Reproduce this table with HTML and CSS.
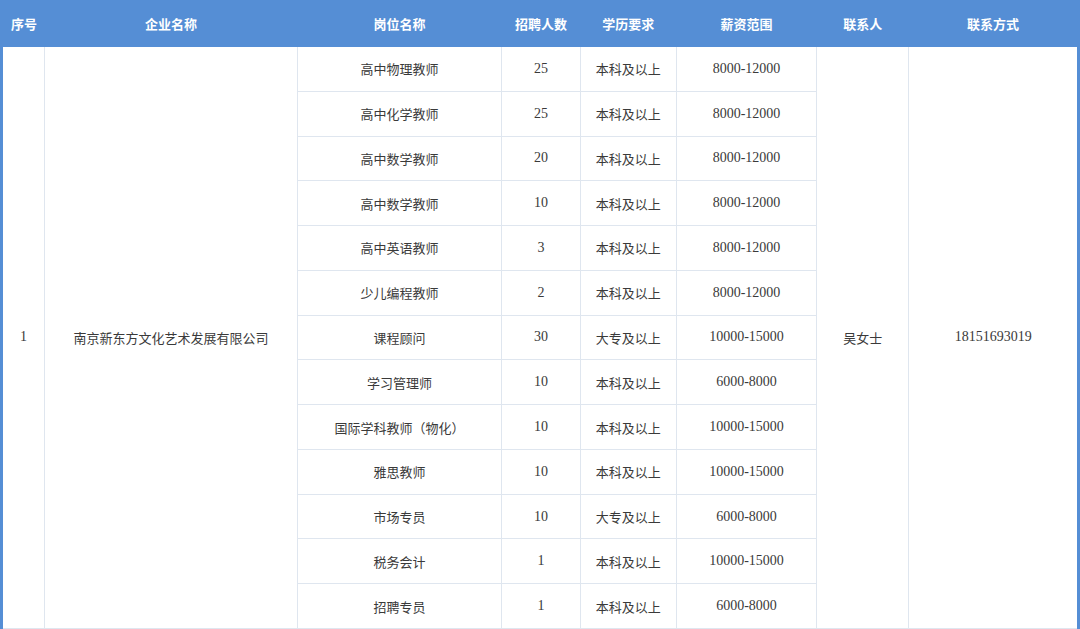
FILE: index.html
```html
<!DOCTYPE html>
<html lang="zh">
<head>
<meta charset="utf-8">
<link rel="stylesheet" href="styles.css">
</head>
<body>
<table class="jobs">
<colgroup>
<col class="c-no"><col class="c-company"><col class="c-post"><col class="c-num"><col class="c-edu"><col class="c-salary"><col class="c-contact"><col class="c-phone">
</colgroup>
<thead>
<tr><th>序号</th><th>企业名称</th><th>岗位名称</th><th>招聘人数</th><th>学历要求</th><th>薪资范围</th><th>联系人</th><th>联系方式</th></tr>
</thead>
<tbody>
<tr><td rowspan="13" class="num">1</td><td rowspan="13">南京新东方文化艺术发展有限公司</td><td>高中物理教师</td><td class="num">25</td><td>本科及以上</td><td class="num">8000-12000</td><td rowspan="13">吴女士</td><td rowspan="13" class="num">18151693019</td></tr>
<tr><td>高中化学教师</td><td class="num">25</td><td>本科及以上</td><td class="num">8000-12000</td></tr>
<tr><td>高中数学教师</td><td class="num">20</td><td>本科及以上</td><td class="num">8000-12000</td></tr>
<tr><td>高中数学教师</td><td class="num">10</td><td>本科及以上</td><td class="num">8000-12000</td></tr>
<tr><td>高中英语教师</td><td class="num">3</td><td>本科及以上</td><td class="num">8000-12000</td></tr>
<tr><td>少儿编程教师</td><td class="num">2</td><td>本科及以上</td><td class="num">8000-12000</td></tr>
<tr><td>课程顾问</td><td class="num">30</td><td>大专及以上</td><td class="num">10000-15000</td></tr>
<tr><td>学习管理师</td><td class="num">10</td><td>本科及以上</td><td class="num">6000-8000</td></tr>
<tr><td>国际学科教师（物化）</td><td class="num">10</td><td>本科及以上</td><td class="num">10000-15000</td></tr>
<tr><td>雅思教师</td><td class="num">10</td><td>本科及以上</td><td class="num">10000-15000</td></tr>
<tr><td>市场专员</td><td class="num">10</td><td>大专及以上</td><td class="num">6000-8000</td></tr>
<tr><td>税务会计</td><td class="num">1</td><td>本科及以上</td><td class="num">10000-15000</td></tr>
<tr><td>招聘专员</td><td class="num">1</td><td>本科及以上</td><td class="num">6000-8000</td></tr>
</tbody>
</table>
</body>
</html>
```
FILE: styles.css
```css
html, body {
  margin: 0;
  padding: 0;
  background: #ffffff;
}
body {
  font-family: "Noto Sans CJK SC", sans-serif;
  color: #3a3a3a;
}
.jobs {
  width: 1080px;
  border-collapse: collapse;
  table-layout: fixed;
  border-left: 3px solid #558ed5;
  border-right: 3px solid #558ed5;
}
.c-no { width: 43px; }
.c-company { width: 252px; }
.c-post { width: 204px; }
.c-num { width: 78px; }
.c-edu { width: 96px; }
.c-salary { width: 140px; }
.c-contact { width: 92px; }
.c-phone { width: 169px; }
.jobs th {
  background: #558ed5;
  color: #ffffff;
  font-size: 13px;
  font-weight: bold;
  height: 47px;
  padding: 0;
  border: none;
  text-align: center;
  vertical-align: middle;
}
.jobs thead tr th:first-child {
  text-align: left;
  padding-left: 8px;
}
.jobs td {
  font-size: 13px;
  height: 43.77px;
  padding: 0;
  border: 1px solid #dfe6ef;
  text-align: center;
  vertical-align: middle;
  font-weight: 400;
}
.jobs td.num {
  font-family: "Liberation Serif", "Noto Sans CJK SC", serif;
  font-size: 14px;
  line-height: 18px;
}
.jobs tbody tr:first-child td {
  border-top: none;
}
```
